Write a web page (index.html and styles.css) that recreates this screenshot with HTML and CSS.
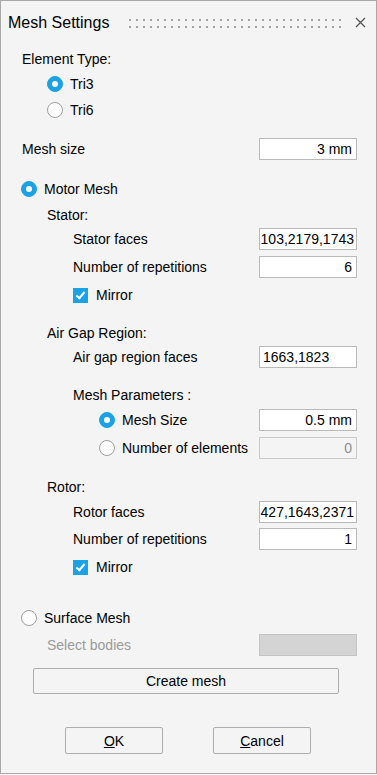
FILE: index.html
```html
<!DOCTYPE html>
<html lang="en">
<head>
  <meta charset="UTF-8" />
  <meta name="viewport" content="width=device-width, initial-scale=1" />
  <title>Mesh Settings</title>
  <link rel="stylesheet" href="styles.css">
</head>
<body>
  <div class="dialog">
    <div class="titlebar">
      <span class="title">Mesh Settings</span>
      <svg class="grip" width="212" height="9" viewBox="0 0 212 9">
        <defs>
          <pattern id="dots" width="7" height="7" patternUnits="userSpaceOnUse">
            <rect width="2" height="2" fill="#a3a3a3" />
          </pattern>
        </defs>
        <rect width="212" height="9" fill="url(#dots)" />
      </svg>
      <svg class="close" width="11" height="11" viewBox="0 0 11 11">
        <path d="M1 1 L10 10 M10 1 L1 10" stroke="#555" stroke-width="1.3" fill="none" />
      </svg>
    </div>

    <div class="content">
      <div class="row ind-0 mt4">Element Type:</div>
      <div class="row ind-1 mt3"><span class="radio on"></span>Tri3</div>
      <div class="row ind-1 mt4"><span class="radio"></span>Tri6</div>

      <div class="row ind-0 mt17">
        <span class="label">Mesh size</span>
        <div class="field right">3 mm</div>
      </div>

      <div class="row ind-r0 mt18"><span class="radio on"></span>Motor Mesh</div>
      <div class="row ind-1 mt4">Stator:</div>
      <div class="row ind-2 mt2">
        <span class="label">Stator faces</span>
        <div class="field right tight">103,2179,1743</div>
      </div>
      <div class="row ind-2 mt6">
        <span class="label">Number of repetitions</span>
        <div class="field right">6</div>
      </div>
      <div class="row ind-2 mt6"><span class="check"></span>Mirror</div>

      <div class="row ind-1 mt16">Air Gap Region:</div>
      <div class="row ind-2 mt2">
        <span class="label">Air gap region faces</span>
        <div class="field">1663,1823</div>
      </div>
      <div class="row ind-2 mt16">Mesh Parameters :</div>
      <div class="row ind-r3 mt3">
        <span class="radio on"></span>
        <span class="label">Mesh Size</span>
        <div class="field right">0.5 mm</div>
      </div>
      <div class="row ind-r3 mt6">
        <span class="radio"></span>
        <span class="label">Number of elements</span>
        <div class="field right disabled">0</div>
      </div>

      <div class="row ind-1 mt17">Rotor:</div>
      <div class="row ind-2 mt3">
        <span class="label">Rotor faces</span>
        <div class="field right tight">427,1643,2371</div>
      </div>
      <div class="row ind-2 mt5">
        <span class="label">Number of repetitions</span>
        <div class="field right">1</div>
      </div>
      <div class="row ind-2 mt6"><span class="check"></span>Mirror</div>

      <div class="row ind-r0 mt29"><span class="radio"></span>Surface Mesh</div>
      <div class="row ind-1 mt5">
        <span class="label muted">Select bodies</span>
        <div class="field picker"></div>
      </div>

      <button class="btn wide">Create mesh</button>

      <div class="actions">
        <button class="btn small"><u>O</u>K</button>
        <button class="btn small"><u>C</u>ancel</button>
      </div>
    </div>
  </div>
</body>
</html>
```

FILE: styles.css
```css
:root {
  --bg: #f4f4f4;
  --frame: #a8a8a8;
  --field-border: #b9b9b9;
  --accent: #1ba1e6;
  --text: #000000;
}
* {
  box-sizing: border-box;
  margin: 0;
  padding: 0;
}
body {
  background: #ffffff;
  font-family: "Liberation Sans", Arial, sans-serif;
  font-size: 14px;
  color: var(--text);
}
.dialog {
  width: 377px;
  height: 774px;
  border: 1px solid var(--frame);
  background: var(--bg);
}
.titlebar {
  height: 43px;
  display: flex;
  align-items: center;
  padding: 0 10px 0 7px;
}
.title {
  font-size: 16px;
}
.grip {
  display: block;
  margin-left: 20px;
  margin-top: 2px;
}
.close {
  display: block;
  margin-left: auto;
}
.content {
  padding-right: 19px;
}
.row {
  height: 22px;
  display: flex;
  align-items: center;
}
.ind-0 { padding-left: 21px; }
.ind-r0 { padding-left: 20px; }
.ind-1 { padding-left: 46px; }
.ind-2 { padding-left: 72px; }
.ind-r3 { padding-left: 98px; }

.mt2 { margin-top: 2px; }
.mt3 { margin-top: 3px; }
.mt4 { margin-top: 4px; }
.mt5 { margin-top: 5px; }
.mt6 { margin-top: 6px; }
.mt16 { margin-top: 16px; }
.mt17 { margin-top: 17px; }
.mt18 { margin-top: 18px; }
.mt29 { margin-top: 29px; }

.label {
  flex: 1;
  white-space: nowrap;
}
.muted {
  color: #9a9a9a;
}
.field {
  width: 98px;
  height: 22px;
  border: 1px solid var(--field-border);
  background: #ffffff;
  display: flex;
  align-items: center;
  padding: 0 4px 0 3px;
  overflow: hidden;
  white-space: nowrap;
}
.field.right {
  justify-content: flex-end;
}
.field.tight {
  padding: 0 2px 0 0;
}
.field.disabled {
  background: var(--bg);
  border-color: #c9c9c9;
  color: #8d8d8d;
}
.field.picker {
  background: #d4d4d4;
  border-color: #c4c4c4;
}
.radio {
  width: 16px;
  height: 16px;
  border-radius: 50%;
  border: 1px solid #9e9e9e;
  background: #ffffff;
  margin-right: 7px;
  flex-shrink: 0;
  position: relative;
}
.radio.on {
  border-color: var(--accent);
  background: var(--accent);
}
.radio.on::after {
  content: "";
  position: absolute;
  left: 4px;
  top: 4px;
  width: 6px;
  height: 6px;
  border-radius: 50%;
  background: #ffffff;
}
.check {
  width: 15px;
  height: 15px;
  background: var(--accent);
  margin-right: 8px;
  flex-shrink: 0;
  position: relative;
}
.check::after {
  content: "";
  position: absolute;
  left: 5px;
  top: 2px;
  width: 3px;
  height: 7px;
  border: solid #ffffff;
  border-width: 0 2px 2px 0;
  transform: rotate(40deg);
}
.btn {
  display: block;
  font-family: inherit;
  font-size: 14px;
  color: var(--text);
  background: var(--bg);
  border: 1px solid #adadad;
  border-radius: 2px;
  cursor: pointer;
}
.btn.wide {
  width: 306px;
  height: 26px;
  margin: 12px 0 0 32px;
}
.actions {
  display: flex;
  gap: 50px;
  margin: 33px 0 0 64px;
}
.btn.small {
  width: 98px;
  height: 27px;
}
```
